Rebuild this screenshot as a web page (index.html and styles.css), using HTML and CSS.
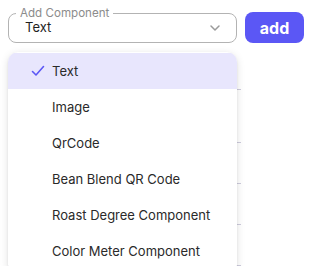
FILE: index.html
```html
<!DOCTYPE html>
<html lang="en">
<head>
  <meta charset="UTF-8">
  <title>Add Component</title>
  <link rel="stylesheet" href="styles.css">
</head>
<body>

  <div class="toolbar">
    <fieldset class="picker">
      <legend>Add Component</legend>
      <div class="picker-value">
        <span>Text</span>
        <svg class="chevron" width="12" height="8" viewBox="0 0 12 8">
          <path d="M2 2 L6 6 L10 2" fill="none" stroke="#9a9a9a" stroke-width="1.5" stroke-linecap="round" stroke-linejoin="round"/>
        </svg>
      </div>
    </fieldset>
    <button class="btn-add">add</button>
  </div>

  <div class="stage">
    <!-- contenu de la page, sous le menu -->
    <div class="rows">
      <div class="row row-a"></div>
      <div class="row row-b"></div>
      <div class="row row-c"></div>
      <div class="row row-c"></div>
      <div class="row row-c"></div>
    </div>

    <ul class="menu">
      <li class="menu-item selected">
        <svg class="check" width="14" height="12" viewBox="0 0 14 12">
          <path d="M1.5 6.5 L5 10 L12.5 1.5" fill="none" stroke="#5b57f5" stroke-width="1.6" stroke-linecap="round" stroke-linejoin="round"/>
        </svg>
        Text
      </li>
      <li class="menu-item">Image</li>
      <li class="menu-item">QrCode</li>
      <li class="menu-item">Bean Blend QR Code</li>
      <li class="menu-item">Roast Degree Component</li>
      <li class="menu-item">Color Meter Component</li>
    </ul>
  </div>

</body>
</html>
```

FILE: styles.css
```css
body {
  margin: 0;
  padding: 0 5px 0 8px;
  font-family: 'Inter', 'Liberation Sans', sans-serif;
  background: #fff;
  color: #1f1f1f;
}

.toolbar {
  display: flex;
  align-items: flex-end;
  gap: 8px;
  padding-top: 6px;
}

.picker {
  width: 229px;
  box-sizing: border-box;
  margin: 0;
  padding: 0;
  border: 1px solid #b3b3b3;
  border-radius: 8px;
}

.picker legend {
  margin-left: 7px;
  padding: 0 4px;
  font-size: 11.6px;
  line-height: 14px;
  color: #8c8c8c;
}

.picker-value {
  display: flex;
  align-items: center;
  justify-content: space-between;
  height: 14px;
  padding: 0 15px 8px 16px;
  font-size: 13px;
}

.chevron {
  display: block;
  margin-top: 2px;
}

.btn-add {
  width: 59px;
  height: 31px;
  border: none;
  border-radius: 8px;
  background: #5b57f5;
  color: #fff;
  font-family: inherit;
  font-size: 16px;
  font-weight: 700;
  cursor: pointer;
}

.stage {
  position: relative;
  margin-top: 9px;
}

.rows {
  width: 233px;
}

.row {
  border-bottom: 1px solid #cdcbdc;
}

.row-a { height: 37px; }
.row-b { height: 52px; }
.row-c { height: 40px; }

/* Menu */
.menu {
  position: absolute;
  top: 0;
  left: 0;
  width: 229px;
  margin: 0;
  padding: 1px 0 5px;
  list-style: none;
  background: #fff;
  border-radius: 10px;
  box-shadow: 0 1px 2px rgba(0,0,0,0.08), 0 2px 8px rgba(0,0,0,0.12);
  overflow: hidden;
}

.menu-item {
  position: relative;
  height: 36px;
  display: flex;
  align-items: center;
  padding-left: 44px;
  font-size: 13px;
  color: #2a2a2a;
}

.menu-item.selected {
  background: #e8e6fd;
}

.check {
  position: absolute;
  left: 23px;
  top: 12px;
}
```
